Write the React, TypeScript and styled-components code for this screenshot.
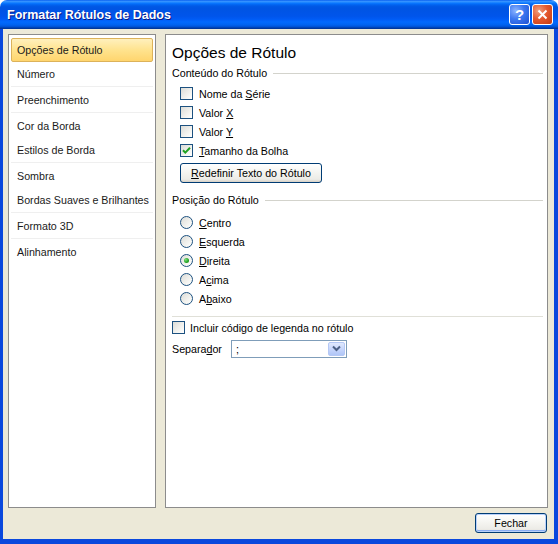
import React from 'react';
import styled, { createGlobalStyle } from 'styled-components';

const GlobalStyle = createGlobalStyle`
  html, body {
    margin: 0;
    padding: 0;
    background: #ffffff;
  }
  body {
    font-family: "Liberation Sans", Arial, sans-serif;
    font-size: 10.7px;
    color: #000;
  }
  * { box-sizing: border-box; }
`;

const Window = styled.div`
  width: 558px;
  height: 544px;
  display: flex;
  flex-direction: column;
`;

const TitleBar = styled.div`
  height: 29px;
  flex: none;
  display: flex;
  align-items: center;
  padding: 0 5px 0 7px;
  border-radius: 7px 7px 0 0;
  background: linear-gradient(
    to bottom,
    #0058ee 0%,
    #3a93ff 4%,
    #288eff 7%,
    #127dff 10%,
    #036ffc 13%,
    #0262ee 17%,
    #0057e5 23%,
    #0054e3 30%,
    #0055eb 56%,
    #005bf5 66%,
    #026afe 76%,
    #0062ef 86%,
    #0052d6 92%,
    #0040ab 96%,
    #003092 100%
  );
`;

const Title = styled.div`
  flex: 1;
  color: #fff;
  font-family: "Liberation Sans", Arial, sans-serif;
  font-weight: bold;
  font-size: 12.5px;
  text-shadow: 1px 1px 0 #0a1883;
  padding-top: 1px;
`;

const CaptionButtons = styled.div`
  display: flex;
  gap: 2px;
`;

const CaptionButton = styled.div<{ $close?: boolean }>`
  width: 21px;
  height: 21px;
  border: 1px solid #fff;
  border-radius: 3px;
  display: flex;
  align-items: center;
  justify-content: center;
  color: #fff;
  font-weight: bold;
  font-size: 15px;
  font-family: "Liberation Sans", Arial, sans-serif;
  background: ${p =>
    p.$close
      ? 'radial-gradient(circle at 30% 30%, #f0a080 0%, #e5592f 45%, #c23a12 100%)'
      : 'radial-gradient(circle at 30% 30%, #8cb4ff 0%, #3c78f0 45%, #1d50d2 100%)'};
`;

const Body = styled.div`
  flex: 1;
  display: flex;
  flex-direction: column;
  background: #ece9d8;
  border-style: solid;
  border-color: #0a48dd;
  border-width: 0 4px 5px 3px;
  padding: 5px 6px 6px 5px;
`;

const Panels = styled.div`
  flex: 1;
  display: flex;
  gap: 9px;
  min-height: 0;
`;

const Pane = styled.div<{ $width: number }>`
  width: ${p => p.$width}px;
  flex: none;
  background: #fff;
  border: 1px solid #8c8c8c;
  display: flex;
  flex-direction: column;
`;

const NavList = styled.div`
  display: flex;
  flex-direction: column;
  padding: 3px 2px 0 2px;
`;

const NavItem = styled.div<{ $active?: boolean }>`
  height: 24px;
  display: flex;
  align-items: center;
  padding-left: 5px;
  white-space: nowrap;
  border: 1px solid ${p => (p.$active ? '#dcb25a' : 'transparent')};
  border-radius: 2px;
  background: ${p =>
    p.$active ? 'linear-gradient(to bottom, #fff0bd 0%, #ffe38e 50%, #ffd56e 100%)' : 'transparent'};
  color: #1a1a1a;
`;

const NavSep = styled.div`
  height: 2px;
  border-top: 1px solid #efefef;
`;

const Content = styled.div`
  padding: 8px 4px 0 6px;
  display: flex;
  flex-direction: column;
  white-space: nowrap;
`;

const Heading = styled.div`
  font-size: 15.5px;
  line-height: 20px;
  height: 20px;
  color: #000;
`;

const GroupLabel = styled.div<{ $mt: number }>`
  display: flex;
  align-items: center;
  gap: 6px;
  height: 14px;
  margin-top: ${p => p.$mt}px;
  &::after {
    content: '';
    flex: 1;
    height: 1px;
    background: #d3d3cc;
  }
`;

const Row = styled.div<{ $indent?: number; $gap?: number; $mt?: number }>`
  height: 19px;
  display: flex;
  align-items: center;
  gap: ${p => p.$gap ?? 6}px;
  padding-left: ${p => p.$indent ?? 8}px;
  margin-top: ${p => p.$mt ?? 0}px;
`;

const Box = styled.span`
  width: 13px;
  height: 13px;
  flex: none;
  border: 1px solid #1c5180;
  background: linear-gradient(135deg, #dcdcd7 0%, #f6f6f3 70%, #ffffff 100%);
  display: flex;
  align-items: center;
  justify-content: center;
`;

const Radio = styled.span<{ $on?: boolean }>`
  width: 13px;
  height: 13px;
  flex: none;
  border-radius: 50%;
  border: 1px solid #1c5180;
  background: linear-gradient(135deg, #dcdcd7 0%, #f6f6f3 70%, #ffffff 100%);
  display: flex;
  align-items: center;
  justify-content: center;
  &::after {
    content: '';
    display: ${p => (p.$on ? 'block' : 'none')};
    width: 5px;
    height: 5px;
    border-radius: 50%;
    background: radial-gradient(circle at 35% 35%, #7ee07e 0%, #21a121 60%, #1a8a1a 100%);
  }
`;

const U = styled.span`
  text-decoration: underline;
`;

const XpButton = styled.div<{ $width: number; $default?: boolean }>`
  width: ${p => p.$width}px;
  height: 20px;
  flex: none;
  display: flex;
  align-items: center;
  justify-content: center;
  border: 1px solid #003c74;
  border-radius: 3px;
  background: linear-gradient(to bottom, #ffffff 0%, #f4f4f0 50%, #ecebe6 85%, #d6d0c5 100%);
  box-shadow: ${p => (p.$default ? 'inset 0 0 0 1px #b9d1fa, inset 0 -1px 0 1px #89adf3' : 'none')};
  color: #000;
`;

const Divider = styled.div`
  height: 1px;
  background: #e0e0d8;
  margin-top: 8px;
`;

const SepLabel = styled.span`
  width: 54px;
  flex: none;
`;

const Combo = styled.div`
  width: 116px;
  height: 18px;
  border: 1px solid #7f9db9;
  background: #fff;
  display: flex;
  align-items: stretch;
`;

const ComboText = styled.span`
  flex: 1;
  padding-left: 4px;
  display: flex;
  align-items: center;
`;

const ComboArrow = styled.span`
  width: 17px;
  margin: 1px;
  border: 1px solid #b5c8f5;
  border-radius: 2px;
  background: linear-gradient(to bottom, #e0e9fd 0%, #c3d3fb 60%, #b0c6f7 100%);
  display: flex;
  align-items: center;
  justify-content: center;
`;

const Footer = styled.div`
  height: 20px;
  margin-top: 5px;
  display: flex;
  justify-content: flex-end;
  padding-right: 1px;
`;

const Check = () => (
  <svg width="9" height="9" viewBox="0 0 9 9">
    <path d="M1 4.2 L3.3 6.6 L8 1.8" fill="none" stroke="#21a121" strokeWidth="2" />
  </svg>
);

const navGroups: string[][] = [
  ['Opções de Rótulo', 'Número'],
  ['Preenchimento'],
  ['Cor da Borda', 'Estilos de Borda'],
  ['Sombra', 'Bordas Suaves e Brilhantes'],
  ['Formato 3D'],
  ['Alinhamento'],
];

export default function App() {
  return (
    <Window>
      <GlobalStyle />
      <TitleBar>
        <Title>Formatar Rótulos de Dados</Title>
        <CaptionButtons>
          <CaptionButton>?</CaptionButton>
          <CaptionButton $close>
            <svg width="11" height="11" viewBox="0 0 11 11">
              <path d="M1.5 1.5 L9.5 9.5 M9.5 1.5 L1.5 9.5" stroke="#fff" strokeWidth="2" />
            </svg>
          </CaptionButton>
        </CaptionButtons>
      </TitleBar>
      <Body>
        <Panels>
          <Pane $width={148}>
            <NavList>
              {navGroups.map((group, gi) => (
                <React.Fragment key={gi}>
                  {gi > 0 && <NavSep />}
                  {group.map(name => (
                    <NavItem key={name} $active={name === 'Opções de Rótulo'}>
                      {name}
                    </NavItem>
                  ))}
                </React.Fragment>
              ))}
            </NavList>
          </Pane>
          <Pane $width={383}>
            <Content>
              <Heading>Opções de Rótulo</Heading>
              <GroupLabel $mt={3}>Conteúdo do Rótulo</GroupLabel>
              <Row $mt={4}>
                <Box />
                <span>
                  Nome da <U>S</U>érie
                </span>
              </Row>
              <Row>
                <Box />
                <span>
                  Valor <U>X</U>
                </span>
              </Row>
              <Row>
                <Box />
                <span>
                  Valor <U>Y</U>
                </span>
              </Row>
              <Row>
                <Box>
                  <Check />
                </Box>
                <span>
                  <U>T</U>amanho da Bolha
                </span>
              </Row>
              <Row $mt={3}>
                <XpButton $width={142}>
                  <span>
                    <U>R</U>edefinir Texto do Rótulo
                  </span>
                </XpButton>
              </Row>
              <GroupLabel $mt={11}>Posição do Rótulo</GroupLabel>
              <Row $mt={6}>
                <Radio />
                <span>
                  <U>C</U>entro
                </span>
              </Row>
              <Row>
                <Radio />
                <span>
                  <U>E</U>squerda
                </span>
              </Row>
              <Row>
                <Radio $on />
                <span>
                  <U>D</U>ireita
                </span>
              </Row>
              <Row>
                <Radio />
                <span>
                  A<U>c</U>ima
                </span>
              </Row>
              <Row>
                <Radio />
                <span>
                  A<U>b</U>aixo
                </span>
              </Row>
              <Divider />
              <Row $indent={0} $gap={5} $mt={1}>
                <Box />
                <span>
                  Incluir código de le<U>g</U>enda no rótulo
                </span>
              </Row>
              <Row $indent={0} $gap={5} $mt={2}>
                <SepLabel>
                  Separa<U>d</U>or
                </SepLabel>
                <Combo>
                  <ComboText>;</ComboText>
                  <ComboArrow>
                    <svg width="9" height="7" viewBox="0 0 9 7">
                      <path d="M1 1.5 L4.5 5 L8 1.5" fill="none" stroke="#4d6185" strokeWidth="2" />
                    </svg>
                  </ComboArrow>
                </Combo>
              </Row>
            </Content>
          </Pane>
        </Panels>
        <Footer>
          <XpButton $width={72} $default>
            Fechar
          </XpButton>
        </Footer>
      </Body>
    </Window>
  );
}
